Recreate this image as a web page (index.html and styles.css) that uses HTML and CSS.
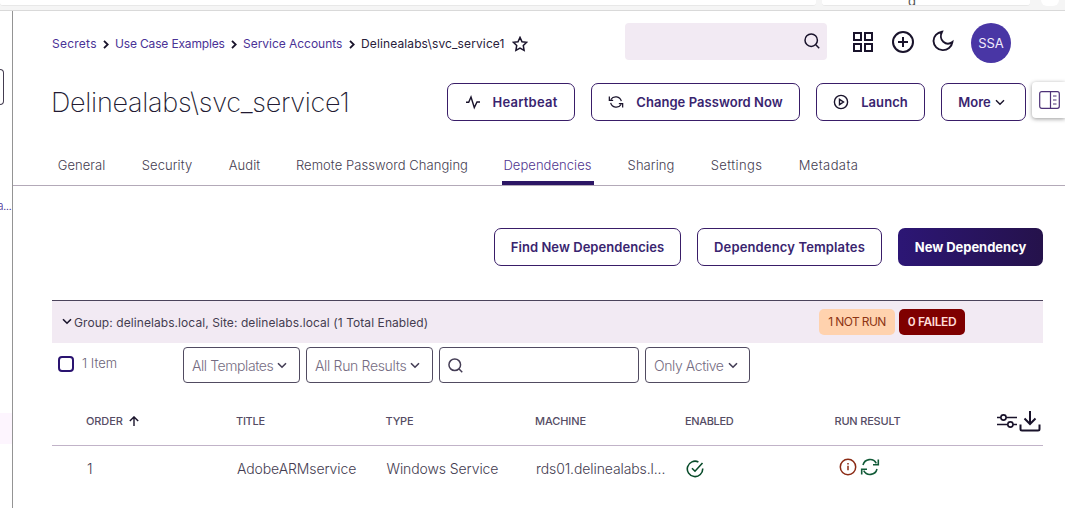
FILE: index.html
```
<!DOCTYPE html>
<html lang="en">
<head>
<meta charset="utf-8">
<title>Delinealabs\svc_service1</title>
<link rel="stylesheet" href="styles.css">
</head>
<body>
<div class="browser"><span class="urlbar"></span><span class="tabbar">g</span><span class="browser-menu"></span></div>
<div class="shell">
<aside class="sidebar"><div class="side-box"></div><span class="side-text">a...</span><div class="side-active"></div></aside>
<main class="main">
<header class="top">
<nav class="crumbs">
<a class="c1">Secrets</a><svg class="sep" viewBox="0 0 6 9"><path d="M1 .8 4.7 4.5 1 8.2"/></svg>
<a class="c2">Use Case Examples</a><svg class="sep" viewBox="0 0 6 9"><path d="M1 .8 4.7 4.5 1 8.2"/></svg>
<a class="c3">Service Accounts</a><svg class="sep" viewBox="0 0 6 9"><path d="M1 .8 4.7 4.5 1 8.2"/></svg>
<span class="c4">Delinealabs\svc_service1</span>
<svg class="star" viewBox="0 0 16 16"><path d="m8 1.4 2 4.3 4.7.6-3.4 3.2.8 4.8L8 12l-4.1 2.3.8-4.8L1.3 6.3 6 5.7z"/></svg>
</nav>
<div class="search"><svg viewBox="0 0 16 16"><circle cx="7.2" cy="7.2" r="6.2"/><path d="m11.8 11.8 3.4 3.4"/></svg></div>
<svg class="i-grid" viewBox="0 0 20 20"><path d="M1 1h7v7H1zM12 1h7v7h-7zM1 12h7v7H1zM12 12h7v7h-7z"/></svg>
<svg class="i-plus" viewBox="0 0 22 22"><circle cx="11" cy="11" r="10"/><path d="M11 6v10M6 11h10"/></svg>
<svg class="i-moon" viewBox="0 0 22 22"><path d="M10 1.700C5 2.500 1.500 6.500 1.500 11a9.500 9.500 0 0 0 18.900 1C17.500 14.200 13.800 13.900 11.300 11.800 8.600 9.400 8.200 5.200 10 1.700z"/></svg>
<span class="avatar">SSA</span>
</header>
<section class="titlebar">
<h1>Delinealabs\svc_service1</h1>
<button class="btn w-heart"><svg viewBox="0 0 16 16"><path d="M1 8.200h2.700L6 3l3.300 10.500L12 8h3"/></svg><span class="t-heart">Heartbeat</span></button>
<button class="btn w-change"><svg viewBox="0 0 18 16"><path d="M3.200 5.200A6.500 6.500 0 0 1 15 7M1.500 1.800v4.400h4.300M14.800 10.800A6.500 6.500 0 0 1 3 9M16.500 14.200V9.800h-4.300"/></svg><span class="t-change">Change Password Now</span></button>
<button class="btn w-launch"><svg viewBox="0 0 16 16"><circle cx="8" cy="8" r="6.600"/><path d="m6.500 5.300 4 2.700-4 2.700z"/></svg><span class="t-launch">Launch</span></button>
<button class="btn w-more"><span class="t-more">More</span><svg class="chev" viewBox="0 0 10 7"><path d="m1 1.200 4 4 4-4"/></svg></button>
<div class="panel"><svg viewBox="0 0 21 18"><rect x=".7" y=".7" width="19.600" height="16.600" rx="2"/><path d="M11.500 1v16M14 5h3.500M14 9h3.500M14 13h3.500"/></svg></div>
</section>
<nav class="tabs">
<a class="tab tab1">General</a><a class="tab tab2">Security</a><a class="tab tab3">Audit</a><a class="tab tab4">Remote Password Changing</a><a class="tab tab5 active">Dependencies</a><a class="tab tab6">Sharing</a><a class="tab tab7">Settings</a><a class="tab tab8">Metadata</a>
</nav>
<div class="actions">
<button class="btn w-find"><span class="t-find">Find New Dependencies</span></button>
<button class="btn w-templ"><span class="t-templ">Dependency Templates</span></button>
<button class="btn primary w-new"><span class="t-new">New Dependency</span></button>
</div>
<div class="group">
<svg class="gchev" viewBox="0 0 10 7"><path d="m1 1.200 4 4 4-4"/></svg>
<span class="gtext">Group: delinelabs.local, Site: delinelabs.local (1 Total Enabled)</span>
<span class="badge notrun">1 NOT RUN</span><span class="badge failed">0 FAILED</span>
</div>
<div class="filters">
<span class="check"></span><span class="count">1 Item</span>
<div class="select s1"><span>All Templates</span><svg class="chev" viewBox="0 0 10 7"><path d="m1 1.200 4 4 4-4"/></svg></div>
<div class="select s2"><span>All Run Results</span><svg class="chev" viewBox="0 0 10 7"><path d="m1 1.200 4 4 4-4"/></svg></div>
<div class="select s3"><svg class="mag" viewBox="0 0 16 16"><circle cx="7.200" cy="7.200" r="6.200"/><path d="m11.800 11.800 3.400 3.400"/></svg></div>
<div class="select s4"><span>Only Active</span><svg class="chev" viewBox="0 0 10 7"><path d="m1 1.200 4 4 4-4"/></svg></div>
</div>
<div class="row head">
<span class="h1c">ORDER<svg class="arrow" viewBox="0 0 10 10"><path d="M5 10V1M.8 5 5 .9 9.200 5"/></svg></span><span class="h2c">TITLE</span><span class="h3c">TYPE</span><span class="h4c">MACHINE</span><span class="h5c">ENABLED</span><span class="h6c">RUN RESULT</span>
<span class="tools"><svg class="i-sliders" viewBox="0 0 20 16"><path d="M0 4.500h4M9 4.500h11M0 11.500h10.800M16 11.500h4"/><circle cx="6.500" cy="4.500" r="2.600"/><circle cx="13.400" cy="11.500" r="2.600"/></svg><svg class="i-down" viewBox="0 0 22 22"><path d="M11 1v13M5.500 8.500 11 14l5.500-5.500M1.500 14.500v4.500q0 1.500 1.500 1.500h16q1.500 0 1.500-1.500v-4.500"/></svg></span>
</div>
<div class="row data">
<span>1</span><span class="d2">AdobeARMservice</span><span class="d3">Windows Service</span><span class="d4">rds01.delinealabs.l...</span><span><svg class="ok" viewBox="0 0 18 18"><path d="M12.400 2A7.700 7.700 0 1 0 16.700 8.500M6 8.200l3 3L16.500 3"/></svg></span>
<span class="result"><svg class="info" viewBox="0 0 18 18"><circle cx="9" cy="9" r="7.700"/><path d="M9 7.800v4.500M9 5v1.400"/></svg><svg class="sync" viewBox="0 0 20 18"><path d="M3 7A7.200 7.200 0 0 1 16.300 5.300M18.300 1.500v5.300H13M17 11A7.200 7.200 0 0 1 3.700 12.700M1.700 16.500v-5.300H7"/></svg></span>
</div>
</main>
</div>
</body>
</html>
```
FILE: styles.css
```
*{box-sizing:border-box}
html,body{margin:0;height:508px;overflow:hidden;background:#fff}
body{font-family:Inter,"Liberation Sans",sans-serif;color:#443c50}
svg{fill:none;stroke:#19132b;stroke-width:1.6;flex:none;display:block}
span,a{white-space:nowrap}
.browser{height:11px;background:#f5f5f5;border-bottom:1px solid #d9d9d9;display:flex;gap:6px;overflow:hidden}
.urlbar,.tabbar{height:6px;background:#fff;border-bottom:1px solid #e8e8e8;border-radius:0 0 3px 3px}
.urlbar{width:816px}
.tabbar{width:208px;font-size:13px;padding-left:86px;overflow:hidden;color:#555;line-height:0;text-indent:0}
.tabbar{line-height:0;padding-top:0;display:flex;align-items:flex-end;height:6px;line-height:8px}
.browser-menu{width:18px;height:6px;margin-left:5px;background:#fff;border-radius:0 0 9px 9px}
.shell{display:flex;height:497px}
.sidebar{width:13px;flex:none;border-right:1px solid #949494;display:flex;flex-direction:column;overflow:hidden}
.side-box{height:36px;width:4px;margin-top:58px;border:1px solid #443c50;border-left:0;border-radius:0 4px 4px 0;flex:none}
.side-text{margin-top:91px;height:20px;line-height:20px;font-size:12px;font-weight:300;color:#4a3296;margin-left:-3px;letter-spacing:-.6px}
.side-active{height:31px;background:#fdf5fe;margin-top:197px}
.main{flex:1;min-width:0}
.top{height:63px;padding:12px 54px 0 39px;display:flex;align-items:flex-start}
.crumbs{display:flex;align-items:center;width:573px;height:42px;font-size:12px;color:#28203a;flex:none}
.crumbs a{color:#4a3296}
.crumbs a,.crumbs span{margin-top:-1px}
.c1{width:45px}.c2{width:110px}.c3{width:100px}.c4{width:144px}
.c1{letter-spacing:.25px}.c2{letter-spacing:-.16px}.c3{letter-spacing:-.03px}.c4{letter-spacing:.12px}
.sep{width:6px;height:9px;margin:0 6px;stroke-width:1.800}
.star{width:16px;height:16px;margin-left:7px;stroke-width:1.500}
.search{width:202px;height:37px;background:#f2eaf3;border-radius:4px;display:flex;align-items:center;justify-content:flex-end;padding-right:7px;flex:none}
.search svg{width:16px;height:16px;stroke-width:1.500;margin-top:-1px}
.i-grid{width:20px;height:20px;margin:9px 0 0 26px;stroke-width:2}
.i-plus{width:22px;height:22px;margin:8px 0 0 19px;stroke-width:2}
.i-moon{width:22px;height:22px;margin:7px 0 0 18px;stroke-width:1.900}
.avatar{width:40px;height:40px;border-radius:50%;background:#4936a5;color:#f1eafb;margin-left:17px;display:flex;align-items:center;justify-content:center;font-size:13px;flex:none}
.titlebar{display:flex;height:57px;padding:9px 0 0 39px;align-items:flex-start}
h1{margin:0 0 0 -1px;width:396px;flex:none;font-size:27px;font-weight:200;line-height:39px;letter-spacing:-.28px;color:#221a32}
.btn{height:38px;border:1px solid #391d68;border-radius:7px;background:#fff;color:#39246f;font:600 13px Inter,"Liberation Sans",sans-serif;display:flex;align-items:center;justify-content:center;padding:0;flex:none;margin-right:16px}
.btn svg{width:16px;height:16px;margin-right:12px;stroke-width:1.400}
.t-heart{letter-spacing:.22px}.t-change{letter-spacing:.05px}.t-launch{letter-spacing:.08px}.t-templ{letter-spacing:.14px}.t-find{letter-spacing:.05px}
.w-heart{width:128px}.w-change{width:209px}.w-launch{width:109px}.w-more{width:85px;margin-right:6px;padding-right:4px}
.btn .chev{width:10px;height:7px;margin:0 0 0 4px}
.panel{width:33px;height:36px;margin-top:-1px;display:flex;align-items:center;padding-left:7px;border-radius:4px 0 0 4px;box-shadow:0 1px 4px #999}
.panel svg{width:21px;height:18px;stroke:#4d3177;stroke-width:1.200}
.tabs{height:55px;border-bottom:1px solid #b3a9b8;padding-left:43px;display:flex;gap:32px;align-items:flex-end;font-size:13px;font-weight:300}
.tab{height:39px;line-height:39px;border-bottom:4px solid transparent;display:flex;justify-content:center;letter-spacing:.06px}
.tab1{width:51px}.tab2{width:55px;margin-left:.5px}.tab3{width:36px}.tab4{width:175px}.tab5{width:92px}.tab6{width:51px}.tab7{width:56px;letter-spacing:.4px}.tab8{width:64px;letter-spacing:.4px}
.active{color:#50358f;border-color:#2c1665}
.actions{height:114px;padding:42px 22px 0;display:flex;justify-content:flex-end}
.w-find{width:187px}.w-templ{width:185px}
.w-new{width:145px;margin:0}
.primary{border:0;color:#fff;font-weight:700;letter-spacing:-.05px;background:linear-gradient(90deg,#2c1675,#25124b)}
.group{margin:0 22px 0 39px;height:43px;border-top:1px solid #4b445b;background:#f2eaf3;display:flex;align-items:center;font-size:12px}
.gchev{width:10px;height:7px;margin:-2px 2px 0 10px}
.gtext{width:745px;flex:none;letter-spacing:.075px}
.badge{height:26px;border-radius:5px;display:flex;align-items:center;justify-content:center;font-size:12px;flex:none;margin-top:-1px}
.notrun{width:76px;background:#ffd2ae;color:#8d3514;margin-right:4px;letter-spacing:-.6px}
.failed{width:66px;background:#7f0000;color:#ffdcd8;font-weight:600;letter-spacing:-.4px}
.filters{display:flex;height:49px;padding:4px 0 0 45px;align-items:flex-start;gap:6px;font-size:14px;font-weight:300}
.check{width:16px;height:16px;border:2px solid #2a1370;border-radius:4px;margin-top:9px}
.count{width:95px;margin-left:2px;line-height:33px;font-size:13px;color:#6b6377}
.select{height:36px;border:1px solid #514b61;border-radius:4px;display:flex;align-items:center;padding-left:8px;color:#756c82}
.select span{letter-spacing:-.42px}.s2 span{letter-spacing:-.33px}
.select .chev{width:10px;height:7px;margin-left:4px;stroke:#443d55}
.mag{width:15px;height:15px;stroke:#443d55}
.s1{width:117px}.s2{width:127px}.s3{width:200px}.s4{width:105px}
.row{margin:0 22px 0 39px;display:grid;grid-template-columns:150px 149.500px 149.500px 150px 149.500px 162px 45px;padding-left:34px;align-items:center}
.head{height:54px;padding-top:4px;border-bottom:1px solid #c1b3c8;font-size:11px;font-weight:500;color:#554c64;letter-spacing:-.1px}
.h5c{letter-spacing:-.35px}.h6c{letter-spacing:-.2px}.h2c{letter-spacing:-.3px}.h3c{letter-spacing:-.2px}
.head span{display:flex;align-items:center}
.arrow{width:10px;height:10px;margin-left:6px;stroke-width:1.400}
.i-sliders{width:20px;height:16px}
.i-down{width:22px;height:22px;margin-left:2px;stroke-width:2}
.data{height:46px;font-size:14px;font-weight:300;padding:0 0 1px 35px;letter-spacing:-.1px}
.ok{width:18px;height:18px;stroke:#084b2a}
.result{display:flex;gap:3px;margin:-4px 0 0 3px}
.info{width:18px;height:18px;stroke:#8b2b15;stroke-width:1.500}
.sync{width:20px;height:18px;stroke:#125b38}
```
